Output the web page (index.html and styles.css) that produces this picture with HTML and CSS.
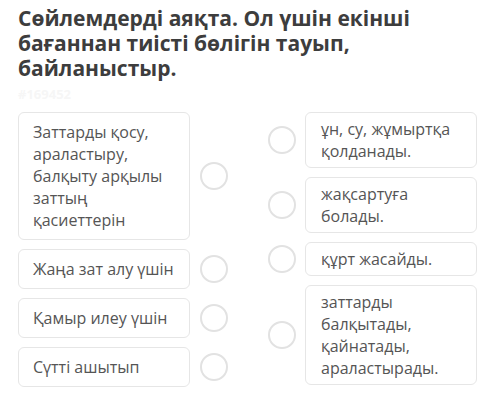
FILE: index.html
```html
<!DOCTYPE html>
<html lang="kk">
<head>
<meta charset="utf-8">
<link rel="stylesheet" href="styles.css">
</head>
<body>
<main class="task">
  <h1 class="task-title">Сөйлемдерді аяқта. Ол үшін екінші бағаннан тиісті бөлігін тауып, байланыстыр.</h1>
  <div class="task-id">#169452</div>
  <div class="match">
    <div class="col col-left">
      <div class="row"><div class="card card-l">Заттарды қосу, араластыру, балқыту арқылы заттың қасиеттерін</div><span class="dot"></span></div>
      <div class="row"><div class="card card-l">Жаңа зат алу үшін</div><span class="dot"></span></div>
      <div class="row"><div class="card card-l">Қамыр илеу үшін</div><span class="dot"></span></div>
      <div class="row"><div class="card card-l">Сүтті ашытып</div><span class="dot"></span></div>
    </div>
    <div class="col col-right">
      <div class="row"><span class="dot"></span><div class="card card-r">ұн, су, жұмыртқа қолданады.</div></div>
      <div class="row"><span class="dot"></span><div class="card card-r">жақсартуға болады.</div></div>
      <div class="row"><span class="dot"></span><div class="card card-r">құрт жасайды.</div></div>
      <div class="row"><span class="dot"></span><div class="card card-r">заттарды балқытады, қайнатады, араластырады.</div></div>
    </div>
  </div>
</main>
</body>
</html>
```

FILE: styles.css
```css
* { box-sizing: border-box; }

html, body {
  margin: 0;
  background: #ffffff;
}

body {
  font-family: "Open Sans", "Noto Sans", sans-serif;
  color: #555555;
}

.task {
  padding: 6px 18px 0 18px;
  width: 500px;
}

.task-title {
  margin: 0;
  font-size: 21px;
  line-height: 25px;
  font-weight: 700;
  color: #3d3d3d;
  width: 420px;
}

.task-id {
  font-size: 13px;
  line-height: 18px;
  font-weight: 700;
  color: #f6f6f6;
  margin: 4px 0 9px 0;
}

.match {
  display: flex;
  gap: 40px;
}

.col {
  display: flex;
  flex-direction: column;
  gap: 9px;
  width: 210px;
}

.row {
  display: flex;
  align-items: center;
  gap: 10px;
}

.col-right .row {
  gap: 9px;
}

.card {
  width: 172px;
  border: 1px solid #e6e6e6;
  border-radius: 6px;
  font-size: 16px;
  line-height: 22px;
  color: #555555;
  background: #ffffff;
}

.card-l {
  padding: 8px 12px 8px 14px;
}

.card-r {
  padding: 5px 12px 5px 15px;
}

.dot {
  flex: none;
  width: 28px;
  height: 28px;
  border: 2px solid #e2e2e2;
  border-radius: 50%;
  background: #ffffff;
}
```
